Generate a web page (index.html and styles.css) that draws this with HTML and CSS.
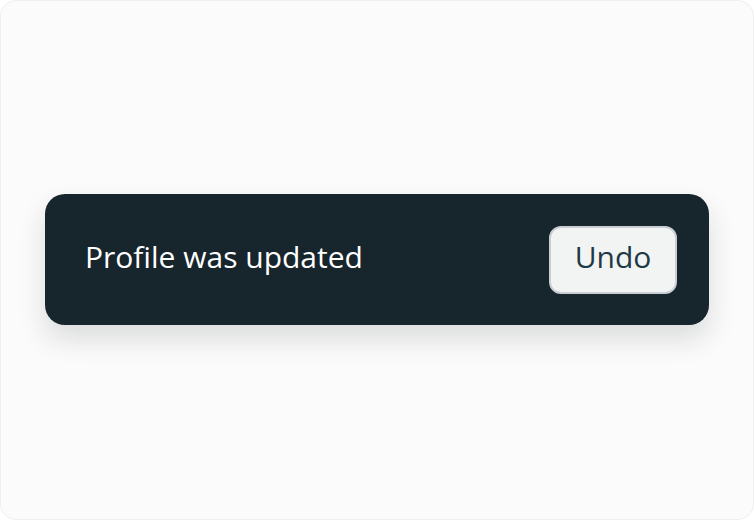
FILE: index.html
```html
<!DOCTYPE html>
<html>
<head>
<meta charset="utf-8">
<link rel="stylesheet" href="styles.css">
</head>
<body>
<div class="frame">
  <div class="toast">
    <span class="msg">Profile was updated</span>
    <button class="undo">Undo</button>
  </div>
</div>
</body>
</html>
```
FILE: styles.css
```css
html, body { margin: 0; padding: 0; }
body {
  width: 754px;
  height: 520px;
  background: #ffffff;
  font-family: "Open Sans", "Noto Sans", sans-serif;
}
.frame {
  box-sizing: border-box;
  width: 754px;
  height: 520px;
  border: 1px solid #efefef;
  border-radius: 16px;
  background: #fbfbfb;
  display: flex;
  align-items: center;
  padding: 0 44px 0 44px;
}
.toast {
  flex: 1;
  height: 131px;
  margin-top: -1px;
  box-sizing: border-box;
  background: #17252d;
  border-radius: 20px;
  display: flex;
  align-items: center;
  justify-content: space-between;
  padding: 0 32px 0 40px;
  box-shadow: 0 14px 28px rgba(20, 30, 35, 0.14);
}
.msg {
  color: #ffffff;
  font-size: 30px;
  line-height: 40px;
  margin-bottom: 6px;
}
.undo {
  width: 128px;
  height: 68px;
  box-sizing: border-box;
  border: 2px solid #c9cfd2;
  border-radius: 12px;
  background: #f2f4f4;
  color: #1f3a45;
  font-family: "Open Sans", "Noto Sans", sans-serif;
  font-size: 30px;
  line-height: 40px;
  padding: 0 0 6px 0;
}
```
